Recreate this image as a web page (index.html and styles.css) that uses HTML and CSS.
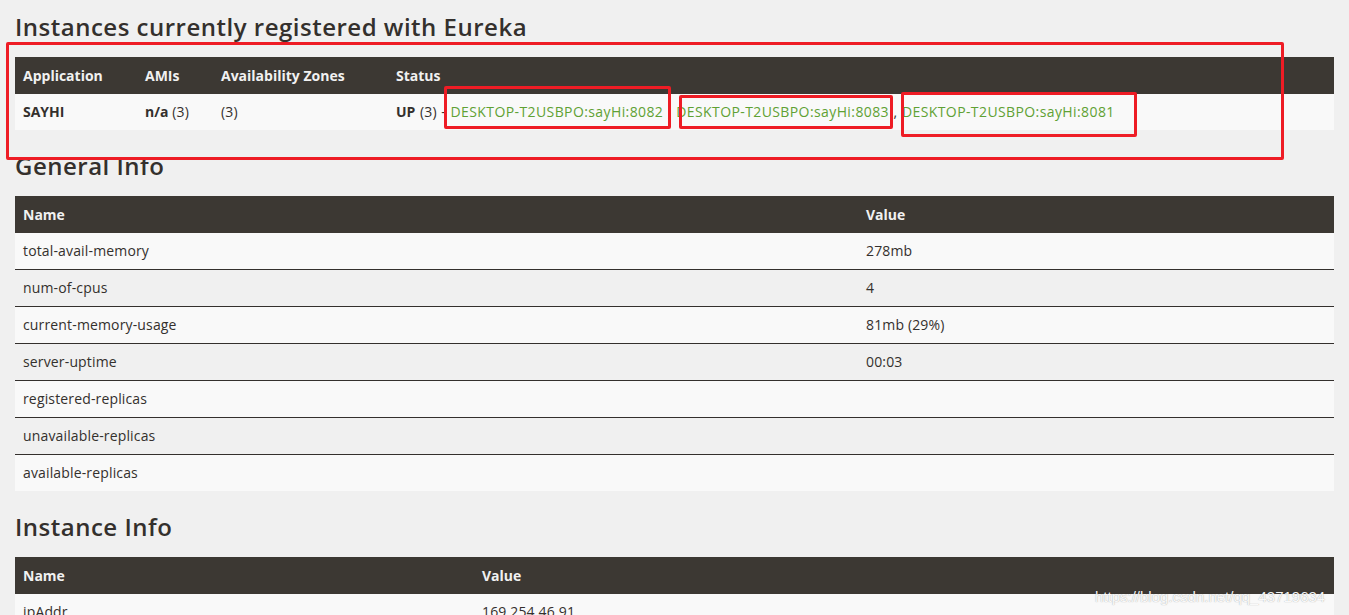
FILE: index.html
```html
<!DOCTYPE html>
<html lang="en">
<head>
<meta charset="utf-8">
<title>Eureka</title>
<link rel="stylesheet" href="styles.css">
</head>
<body>
<div class="page">
  <h2 class="title">Instances currently registered with Eureka</h2>
  <table class="tbl apps">
    <thead>
      <tr><th class="c-app">Application</th><th class="c-ami">AMIs</th><th class="c-zone">Availability Zones</th><th>Status</th></tr>
    </thead>
    <tbody>
      <tr>
        <td><b>SAYHI</b></td>
        <td><b>n/a</b> (3)</td>
        <td>(3)</td>
        <td class="status"><b>UP</b> (3) - <a href="#">DESKTOP-T2USBPO:sayHi:8082</a> , <a href="#">DESKTOP-T2USBPO:sayHi:8083</a> , <a href="#">DESKTOP-T2USBPO:sayHi:8081</a></td>
      </tr>
    </tbody>
  </table>

  <h2 class="title">General Info</h2>
  <table class="tbl general">
    <thead><tr><th class="c-name1">Name</th><th>Value</th></tr></thead>
    <tbody>
      <tr><td>total-avail-memory</td><td>278mb</td></tr>
      <tr><td>num-of-cpus</td><td>4</td></tr>
      <tr><td>current-memory-usage</td><td>81mb (29%)</td></tr>
      <tr><td>server-uptime</td><td>00:03</td></tr>
      <tr><td>registered-replicas</td><td></td></tr>
      <tr><td>unavailable-replicas</td><td></td></tr>
      <tr><td>available-replicas</td><td></td></tr>
    </tbody>
  </table>

  <h2 class="title">Instance Info</h2>
  <table class="tbl instance">
    <thead><tr><th class="c-name2">Name</th><th>Value</th></tr></thead>
    <tbody>
      <tr><td>ipAddr</td><td>169.254.46.91</td></tr>
      <tr><td>status</td><td>UP</td></tr>
    </tbody>
  </table>
</div>

<div class="mark mark-outer"></div>
<div class="mark mark-1"></div>
<div class="mark mark-2"></div>
<div class="mark mark-3"></div>
<div class="watermark">https://blog.csdn.net/qq_43719634</div>
</body>
</html>
```

FILE: styles.css
```css
html, body {
  margin: 0;
  padding: 0;
  background: #f0f0f0;
}

body {
  font-family: "Open Sans", "Noto Sans", sans-serif;
  font-size: 14px;
  color: #34302d;
}

.page {
  padding: 13px 15px 40px 15px;
}

.title {
  margin: 0 0 16px 0;
  font-family: "Open Sans", "Noto Sans", sans-serif;
  font-weight: 600;
  font-size: 24px;
  line-height: 28px;
  letter-spacing: 0.5px;
  color: #34302d;
}

.tbl {
  width: 100%;
  border-collapse: collapse;
  margin-bottom: 22px;
}

.tbl th {
  background: #3c3833;
  color: #f1f1f1;
  font-weight: 700;
  text-align: left;
  height: 37px;
  padding: 0 8px;
  box-sizing: border-box;
  line-height: 18px;
}

.tbl td {
  height: 37px;
  padding: 0 8px;
  box-sizing: border-box;
  border-top: 1px solid #34302d;
  line-height: 18px;
  letter-spacing: 0.15px;
}

.tbl td.status { word-spacing: 0.8px; }

.tbl tbody tr:first-child td { border-top: 0; height: 36px; }

.tbl tbody tr:nth-child(odd) td { background: #f9f9f9; }
.tbl tbody tr:nth-child(even) td { background: #f0f0f0; }

.c-app { width: 122px; }
.c-ami { width: 76px; }
.c-zone { width: 175px; }
.c-name1 { width: 843px; }
.c-name2 { width: 459px; }

.tbl b { font-weight: 700; letter-spacing: 0; }

a {
  color: #5fa134;
  text-decoration: none;
  letter-spacing: 0.4px;
}

.mark {
  position: absolute;
  border: 3px solid #ee1c25;
  border-radius: 2px;
  box-sizing: border-box;
  pointer-events: none;
}
.mark-outer { left: 6px; top: 42px; width: 1278px; height: 118px; }
.mark-1 { left: 444px; top: 86px; width: 227px; height: 43px; }
.mark-2 { left: 679px; top: 95px; width: 214px; height: 34px; }
.mark-3 { left: 901px; top: 92px; width: 236px; height: 45px; }

.watermark {
  position: absolute;
  left: 1095px;
  top: 588px;
  font-family: "Liberation Sans", Arial, sans-serif;
  font-size: 15px;
  color: rgba(255, 255, 255, 0.95);
  text-shadow: 0 0 1px rgba(60, 60, 60, 0.5);
  white-space: nowrap;
}
```
